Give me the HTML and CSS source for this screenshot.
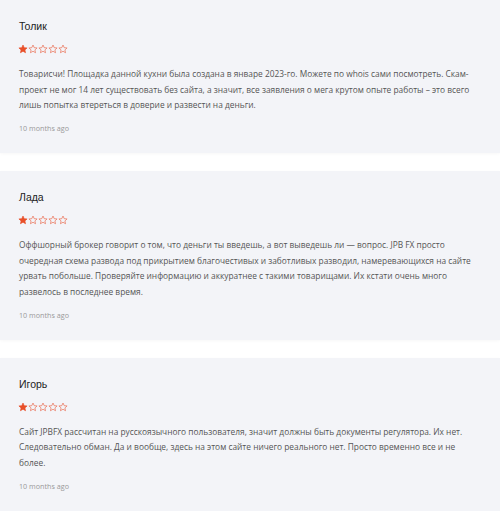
FILE: index.html
```html
<!DOCTYPE html>
<html lang="ru">
<head>
    <meta charset="UTF-8">
    <meta name="viewport" content="width=device-width, initial-scale=1.0">
    <title>Отзывы</title>
    <link rel="stylesheet" href="styles.css">
</head>
<body>
    <div class="reviews">
        <div class="review">
            <div class="review-name">Толик</div>
            <div class="stars">
                <svg class="star filled" viewBox="0 0 24 24"><path d="M12 2.5l2.9 6.3 6.9.7-5.2 4.6 1.5 6.8L12 17.4l-6.1 3.5 1.5-6.8-5.2-4.6 6.9-.7z"/></svg>
                <svg class="star" viewBox="0 0 24 24"><path d="M12 2.5l2.9 6.3 6.9.7-5.2 4.6 1.5 6.8L12 17.4l-6.1 3.5 1.5-6.8-5.2-4.6 6.9-.7z"/></svg>
                <svg class="star" viewBox="0 0 24 24"><path d="M12 2.5l2.9 6.3 6.9.7-5.2 4.6 1.5 6.8L12 17.4l-6.1 3.5 1.5-6.8-5.2-4.6 6.9-.7z"/></svg>
                <svg class="star" viewBox="0 0 24 24"><path d="M12 2.5l2.9 6.3 6.9.7-5.2 4.6 1.5 6.8L12 17.4l-6.1 3.5 1.5-6.8-5.2-4.6 6.9-.7z"/></svg>
                <svg class="star" viewBox="0 0 24 24"><path d="M12 2.5l2.9 6.3 6.9.7-5.2 4.6 1.5 6.8L12 17.4l-6.1 3.5 1.5-6.8-5.2-4.6 6.9-.7z"/></svg>
            </div>
            <p class="review-text">Товарисчи! Площадка данной кухни была создана в январе 2023-го. Можете по whois сами посмотреть. Скам-проект не мог 14 лет существовать без сайта, а значит, все заявления о мега крутом опыте работы – это всего лишь попытка втереться в доверие и развести на деньги.</p>
            <div class="review-date">10 months ago</div>
        </div>

        <div class="review">
            <div class="review-name">Лада</div>
            <div class="stars">
                <svg class="star filled" viewBox="0 0 24 24"><path d="M12 2.5l2.9 6.3 6.9.7-5.2 4.6 1.5 6.8L12 17.4l-6.1 3.5 1.5-6.8-5.2-4.6 6.9-.7z"/></svg>
                <svg class="star" viewBox="0 0 24 24"><path d="M12 2.5l2.9 6.3 6.9.7-5.2 4.6 1.5 6.8L12 17.4l-6.1 3.5 1.5-6.8-5.2-4.6 6.9-.7z"/></svg>
                <svg class="star" viewBox="0 0 24 24"><path d="M12 2.5l2.9 6.3 6.9.7-5.2 4.6 1.5 6.8L12 17.4l-6.1 3.5 1.5-6.8-5.2-4.6 6.9-.7z"/></svg>
                <svg class="star" viewBox="0 0 24 24"><path d="M12 2.5l2.9 6.3 6.9.7-5.2 4.6 1.5 6.8L12 17.4l-6.1 3.5 1.5-6.8-5.2-4.6 6.9-.7z"/></svg>
                <svg class="star" viewBox="0 0 24 24"><path d="M12 2.5l2.9 6.3 6.9.7-5.2 4.6 1.5 6.8L12 17.4l-6.1 3.5 1.5-6.8-5.2-4.6 6.9-.7z"/></svg>
            </div>
            <p class="review-text">Оффшорный брокер говорит о том, что деньги ты введешь, а вот выведешь ли — вопрос. JPB FX просто очередная схема развода под прикрытием благочестивых и заботливых разводил, намеревающихся на сайте урвать побольше. Проверяйте информацию и аккуратнее с такими товарищами. Их кстати очень много развелось в последнее время.</p>
            <div class="review-date">10 months ago</div>
        </div>

        <div class="review">
            <div class="review-name">Игорь</div>
            <div class="stars">
                <svg class="star filled" viewBox="0 0 24 24"><path d="M12 2.5l2.9 6.3 6.9.7-5.2 4.6 1.5 6.8L12 17.4l-6.1 3.5 1.5-6.8-5.2-4.6 6.9-.7z"/></svg>
                <svg class="star" viewBox="0 0 24 24"><path d="M12 2.5l2.9 6.3 6.9.7-5.2 4.6 1.5 6.8L12 17.4l-6.1 3.5 1.5-6.8-5.2-4.6 6.9-.7z"/></svg>
                <svg class="star" viewBox="0 0 24 24"><path d="M12 2.5l2.9 6.3 6.9.7-5.2 4.6 1.5 6.8L12 17.4l-6.1 3.5 1.5-6.8-5.2-4.6 6.9-.7z"/></svg>
                <svg class="star" viewBox="0 0 24 24"><path d="M12 2.5l2.9 6.3 6.9.7-5.2 4.6 1.5 6.8L12 17.4l-6.1 3.5 1.5-6.8-5.2-4.6 6.9-.7z"/></svg>
                <svg class="star" viewBox="0 0 24 24"><path d="M12 2.5l2.9 6.3 6.9.7-5.2 4.6 1.5 6.8L12 17.4l-6.1 3.5 1.5-6.8-5.2-4.6 6.9-.7z"/></svg>
            </div>
            <p class="review-text">Сайт JPBFX рассчитан на русскоязычного пользователя, значит должны быть документы регулятора. Их нет. Следовательно обман. Да и вообще, здесь на этом сайте ничего реального нет. Просто временно все и не более.</p>
            <div class="review-date">10 months ago</div>
        </div>
    </div>
</body>
</html>
```

FILE: styles.css
```css
body {
    margin: 0;
    background: #ffffff;
    font-family: "Open Sans", sans-serif;
}
.reviews {
    display: flex;
    flex-direction: column;
    gap: 18px;
}
.review {
    background-color: #f3f4f8;
    padding: 18px 18px 19px 19px;
    box-shadow: 0 1px 3px rgba(0, 0, 0, 0.03);
}
.review-name {
    font-family: "Liberation Sans", Arial, sans-serif;
    font-size: 10.5px;
    line-height: 17px;
    color: #222;
}
.stars {
    display: flex;
    margin-top: 9px;
    height: 10px;
    margin-left: -1px;
}
.star {
    width: 10px;
    height: 10px;
    fill: none;
    stroke: #e8674a;
    stroke-width: 1.6;
    stroke-linejoin: round;
}
.star.filled {
    fill: #e8502a;
    stroke: #e8502a;
}
.review-text {
    margin: 12px 0 0 0;
    font-size: 8.35px;
    line-height: 15.5px;
    color: #555;
}
.review-date {
    margin-top: 9.5px;
    font-size: 7.2px;
    line-height: 12px;
    color: #999;
}
```
